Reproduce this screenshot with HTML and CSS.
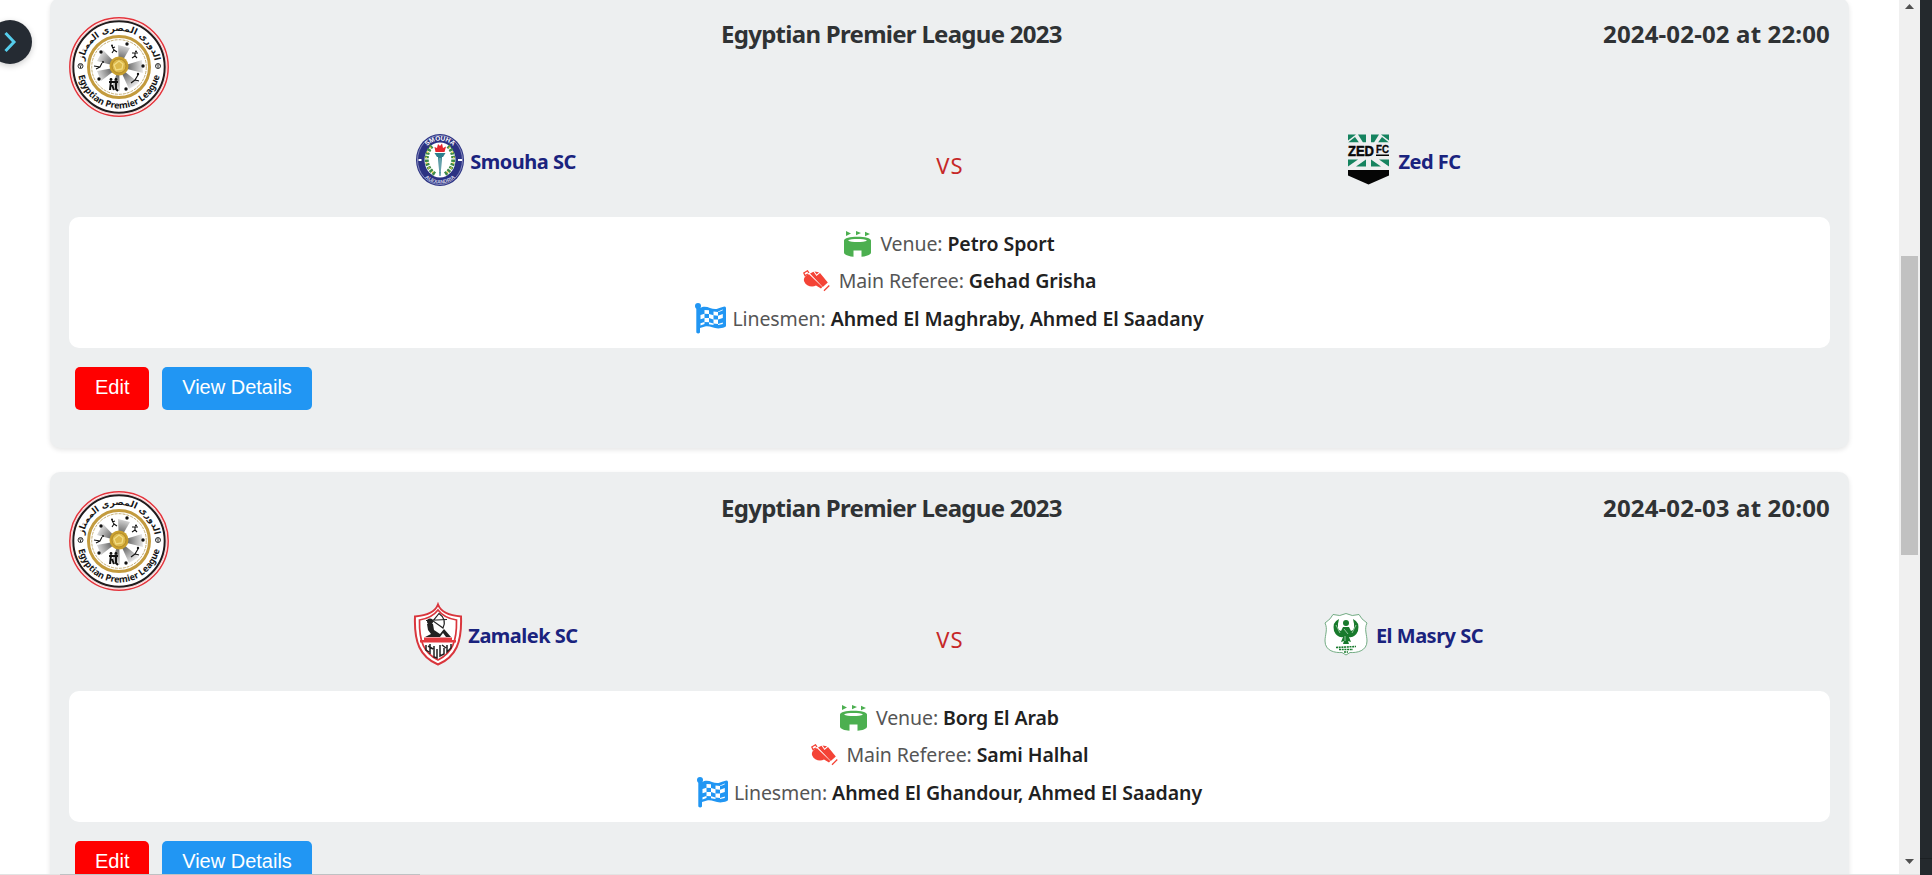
FILE: index.html
```
<!DOCTYPE html>
<html lang="en">
<head>
<meta charset="utf-8">
<title>Matches</title>
<link rel="stylesheet" href="styles.css">
</head>
<body>
<svg class="defs" width="0" height="0">
  <defs>
    <radialGradient id="ray" gradientUnits="userSpaceOnUse" cx="50" cy="50" r="26">
      <stop offset="0.3" stop-color="#666"/><stop offset="1" stop-color="#f4f4f4"/>
    </radialGradient>
    <path id="arcTop" d="M14 50A36 36 0 0 1 86 50"/>
    <path id="arcBottom" d="M8.500 50A41.500 41.500 0 0 0 91.500 50"/>
    <path id="smTop" d="M6.500 26A18.500 19.500 0 0 1 43.500 26"/>
    <path id="smBottom" d="M2.500 26A22.500 23.500 0 0 0 47.500 26"/>
    <symbol id="league" viewBox="0 0 100 100">
      <circle cx="50" cy="50" r="49.200" fill="#fff" stroke="#e4343c" stroke-width="1.500"/>
      <circle cx="50" cy="50" r="47.600" fill="#fff" stroke="#f4a5a8" stroke-width=".6"/>
      <circle cx="50" cy="50" r="45.700" fill="#fff" stroke="#211c1d" stroke-width="2"/>
      <circle cx="50" cy="50" r="30.500" fill="#fff" stroke="#c39b3e" stroke-width="3"/>
      <circle cx="50" cy="50" r="27.300" fill="none" stroke="#b59a55" stroke-width=".8" stroke-dasharray="3 1"/>
      <g fill="url(#ray)">
        <path d="M50 50L49 28L61 31Z"/>
        <path d="M50 50L73 43L74 56Z"/>
        <path d="M50 50L70 66L60 72Z"/>
        <path d="M50 50L51 74L42 73Z"/>
        <path d="M50 50L32 64L28 54Z"/>
        <path d="M50 50L28 44L34 33Z"/>
      </g>
      <circle cx="50" cy="49" r="9.500" fill="#c9a02f"/>
      <circle cx="50" cy="49" r="7" fill="#ddb94b" stroke="#a98122" stroke-width=".8"/>
      <path d="M50 44L54 47L53 52L47 53L45 48Z" fill="none" stroke="#f2dc83" stroke-width="1.300"/>
      <g fill="#111">
        <circle cx="58" cy="27" r="1.700"/><circle cx="32" cy="35" r="1.700"/><circle cx="74" cy="49" r="1.700"/>
        <circle cx="30" cy="62" r="1.700"/><circle cx="57" cy="72" r="1.700"/>
        <circle cx="43" cy="28.500" r="1"/><circle cx="67" cy="34.500" r="1"/><circle cx="69" cy="57" r="1.200"/><circle cx="34" cy="45" r="1"/><circle cx="42" cy="62.500" r="1.400"/><circle cx="47" cy="62.500" r="1.400"/>
      </g>
      <g fill="none" stroke="#111" stroke-width="1.100">
        <path d="M43 29L45 33L48 35M45 33L43 36M46 30L43 31"/>
        <path d="M63 36L69 36M66 36L66 39L68 41M66 39L63 41"/>
        <path d="M33 46L31 50L25 49M31 50L27 52"/>
        <path d="M69 58L66 63L70 64M66 63L62 66"/>
        <path stroke-width="2" d="M42 64L41 73M47 64L47 72L49 74M40 65L49 65M43 68L45 73"/>
      </g>
      <g fill="none" stroke="#333" stroke-width="1">
        <circle cx="11.500" cy="49" r="2.500"/><circle cx="89" cy="49" r="2.500"/>
        <path d="M10 48H13M11.500 49V51M87.500 48H90.500M89 49V51"/>
      </g>
      <text class="crest-arabic"><textPath href="#arcTop" startOffset="50%" text-anchor="middle">الدورى المصرى الممتاز</textPath></text>
      <text class="crest-latin"><textPath href="#arcBottom" startOffset="50%" text-anchor="middle">Egyptian Premier League</textPath></text>
    </symbol>
    <symbol id="stadium" viewBox="0 0 27 26">
      <path d="M2 0L7 2.500L2 5ZM12 0L17 2L12 4.200ZM21 .8L26 3L21 5.300Z"/>
      <path fill-rule="evenodd" d="M0 9.500C0 7 6 5.700 13.500 5.700S27 7 27 9.500V21.500C27 24 22 25.400 17.500 25.700V19.500H9.500V25.700C5 25.400 0 24 0 21.500ZM4 9.400C7 11.400 20 11.400 23 9.400C20 7.500 7 7.500 4 9.400Z"/>
    </symbol>
    <symbol id="whistle" viewBox="0 0 27 22">
      <path d="M6 4.200L19.300 17L18 18.500L13 15.500C9 18 3 16 1.200 11.500C.2 8.500 2 5.500 6 4.200Z"/>
      <path d="M7 3.500L10.500 1.800L13.500 6L17 3L24.800 12.600L19.800 17Z"/>
      <path d="M11.500 1.500L16 2.300L13.700 4.600Z"/>
      <path fill="none" stroke="#f44336" stroke-width="1.300" d="M5 4L2 5.500L.8 3L4.500 .8L6 3M21 20.800L26.300 15.500"/>
    </symbol>
    <symbol id="flag" viewBox="0 0 31 31">
      <circle cx="3" cy="3" r="3"/><path d="M1.300 3H5V29.500Q3.200 31.500 1.300 29.500Z"/>
      <path d="M5 5C12 1 17 8 23 5.500C26 4.300 28 4 30 3.500Q31 4 31 5V22.500Q31 23.500 30 24C20 28 16 22 10 23.500L5 25Z"/>
      <path fill="#fff" d="M9.500 7L14 7.200V11L9.500 10.700ZM18.500 8.500L23 9V12.700L18.500 12.200ZM5.500 12L9.500 10.700V15L5.500 16.200ZM14 11L18.500 12.200V16.500L14 15ZM23 12.700L27.800 11V15L23 16.500ZM9.500 15L14 15V19.200L9.500 19ZM18.500 16.500L23 16.500V21L18.500 20.500ZM27.800 7.300L25 8.500L23 9V8.500L27.800 6.500ZM5.500 20.300L9.500 19V21L5.500 22.500ZM14 19.200L18.500 20.500V22L14 21.300ZM23 21L27.800 19.500V21L23 22Z"/>
    </symbol>
  </defs>
</svg>

<main class="page">
  <section class="content">
    <article class="card">
      <header class="card-head">
        <svg class="league"><use href="#league"/></svg>
        <h2 class="title">Egyptian Premier League 2023</h2>
        <time class="date">2024-02-02 at 22:00</time>
      </header>
      <div class="teams">
        <div class="team">
          <svg class="badge" viewBox="0 0 50 64">
            <g transform="translate(0 6)">
              <ellipse cx="25" cy="26" rx="24" ry="26" fill="#2b3283"/>
              <ellipse cx="25" cy="26" rx="22.500" ry="24.500" fill="none" stroke="#aeb2d6" stroke-width=".7"/>
              <ellipse cx="25" cy="26" rx="15.500" ry="17.500" fill="#fff"/>
              <path fill="none" stroke="#3e8a48" stroke-width="4" stroke-dasharray="2.500 1.200" d="M17 12C10 19 9 33 20 40M33 12C40 19 41 33 30 40"/>
              <path fill="none" stroke="#e8c84a" stroke-width="1.500" stroke-dasharray="1.500 4" d="M16 13C9 20 9 33 20 40M34 13C41 20 41 33 30 40"/>
              <path fill="#e5262d" d="M20.500 18L19.500 13L22 14L23 10L25 12L27 9.500L28 14L31 12.500L29.500 18Z"/>
              <path fill="#2d7f8c" d="M19.500 19H30.500L28 23H27L25.500 42H24.500L23 23H22Z"/>
              <path stroke="#9fc4cb" d="M25 24V38"/>
              <path stroke="#fff" stroke-width="2" d="M3.500 26H6.500M43 26H47"/>
              <text class="smouha-top"><textPath href="#smTop" startOffset="50%" text-anchor="middle">SMOUHA</textPath></text>
              <text class="smouha-bottom"><textPath href="#smBottom" startOffset="50%" text-anchor="middle">ALEXANDRIA</textPath></text>
            </g>
          </svg>
          <span class="team-name">Smouha SC</span>
        </div>
        <span class="versus">VS</span>
        <div class="team">
          <svg class="badge" viewBox="0 0 50 64">
            <g transform="translate(5 6.500)">
              <path fill="#15835f" d="M0 0H8L0 6ZM10 0H18V8H15ZM23 0H31L26 8H23ZM33 0H41V6ZM0 8L7 2.500L11 8ZM41 8L34 2.500L30 8Z"/>
              <path fill="#15835f" d="M0 25H10L0 32ZM8 32L18 25V32ZM23 25L33 32H23ZM31 25H41V32Z"/>
              <rect y="8" width="41" height="16" fill="#edeff0"/>
              <text class="zed-word" x="0" y="21.500" textLength="26" lengthAdjust="spacingAndGlyphs">ZED</text>
              <text class="zed-fc" x="28" y="18" textLength="13" lengthAdjust="spacingAndGlyphs">FC</text>
              <path fill="#050505" d="M28 20H41V21.500H28ZM0 35.500H41V41L20.500 50L0 41Z"/>
            </g>
          </svg>
          <span class="team-name">Zed FC</span>
        </div>
      </div>
      <div class="details">
        <p class="row"><svg class="icon stadium"><use href="#stadium"/></svg><span class="label">Venue: <b>Petro Sport</b></span></p>
        <p class="row"><svg class="icon whistle"><use href="#whistle"/></svg><span class="label">Main Referee: <b>Gehad Grisha</b></span></p>
        <p class="row lines"><svg class="icon flag"><use href="#flag"/></svg><span class="label">Linesmen: <b>Ahmed El Maghraby, Ahmed El Saadany</b></span></p>
      </div>
      <div class="actions"><button class="btn edit">Edit</button><button class="btn view">View Details</button></div>
    </article>

    <article class="card">
      <header class="card-head">
        <svg class="league"><use href="#league"/></svg>
        <h2 class="title">Egyptian Premier League 2023</h2>
        <time class="date">2024-02-03 at 20:00</time>
      </header>
      <div class="teams">
        <div class="team">
          <svg class="badge" viewBox="0 0 50 64">
            <path fill="#fff" stroke="#d9363d" stroke-width="2" d="M25 2.500Q29 13 48 14.500C49 40 43 55 25 62.500C7 55 1 40 2 14.500Q21 13 25 2.500Z"/>
            <path fill="#fff" stroke="#d9363d" stroke-width="1.700" d="M25 8Q31 16 43.500 18C44 40 39 51 25 58C11 51 6 40 6.500 18Q19 16 25 8Z"/>
            <path fill="#e33b40" d="M11 35.500H39V38H43V40.500H7V38H11Z"/>
            <circle cx="17" cy="19.500" r="3" fill="#222"/>
            <path fill="#222" d="M14 22L20 22L21 28L27 32L31 27L38 35H33L30 31L27 35H12L18 32L15 28Z"/>
            <path fill="none" stroke="#222" stroke-width="1.200" d="M13 18.500L34 17.500M26 11.500Q34 17 30 26L20 19Z"/>
            <path fill="none" stroke="#222" stroke-width="1.500" d="M13 43V48L16 50M17 42V52M21 44V55L24 56V47M27 43V54L31 52V46M34 43V50L38 46V42M29 43L33 46M15 44L20 47"/>
          </svg>
          <span class="team-name">Zamalek SC</span>
        </div>
        <span class="versus">VS</span>
        <div class="team">
          <svg class="badge" viewBox="0 0 50 64">
            <path fill="#fff" stroke="#65a477" stroke-width=".9" d="M12 12.500Q19 15 25 11.500Q31 15 38 12.500Q40 17 46 21C43 27 46 33 46 39C46 49 36 51 29 50.500L25 53L21 50.500C14 51 4 49 4 39C4 33 7 27 4 21Q10 17 12 12.500Z"/>
            <g fill="#187a2c">
              <circle cx="25" cy="21" r="3"/>
              <path d="M22 25H28L30 29Q35 28 32 17Q39 20 37 29Q34 36 28 35L30 40L27 39L28 42H22L23 39L20 40L22 35Q16 36 13 29Q11 20 18 17Q15 28 20 29Z"/>
              <path fill="none" stroke="#187a2c" stroke-width="1.600" stroke-dasharray="2 .7" d="M15 45.500L35 44.500M18 47.500H32M23 50H27"/>
            </g>
            <path fill="none" stroke="#c8e3cd" stroke-width=".7" d="M15 23L19 31M35 23L31 31M23 27L27 32M24 34V39"/>
          </svg>
          <span class="team-name">El Masry SC</span>
        </div>
      </div>
      <div class="details">
        <p class="row"><svg class="icon stadium"><use href="#stadium"/></svg><span class="label">Venue: <b>Borg El Arab</b></span></p>
        <p class="row"><svg class="icon whistle"><use href="#whistle"/></svg><span class="label">Main Referee: <b>Sami Halhal</b></span></p>
        <p class="row lines"><svg class="icon flag"><use href="#flag"/></svg><span class="label">Linesmen: <b>Ahmed El Ghandour, Ahmed El Saadany</b></span></p>
      </div>
      <div class="actions"><button class="btn edit">Edit</button><button class="btn view">View Details</button></div>
    </article>
  </section>
  <aside class="scrollbar">
    <svg width="21" height="16"><path fill="#505050" d="M6 9L10.500 4L15 9Z"/></svg>
    <div class="thumb"></div>
    <svg class="down" width="21" height="16"><path fill="#505050" d="M6 4H15L10.500 9Z"/></svg>
  </aside>
  <aside class="edge"></aside>
</main>
<button class="toggle" aria-label="Open menu"><svg width="64" height="64" viewBox="0 0 64 64"><path fill="none" stroke="#55cdec" stroke-width="3" d="M37.500 23L46 32L37.500 41"/></svg></button>
<div class="bottom-line"><span></span></div>
</body>
</html>
```
FILE: styles.css
```
* { box-sizing: border-box; }
body { margin: 0; height: 875px; overflow: hidden; background: #fff; font-family: "Noto Sans", "Open Sans", sans-serif; }
.defs { position: absolute; }
.page { display: flex; height: 875px; overflow: hidden; }
.content { flex: 1; height: 875px; overflow: hidden; padding: 0 50px; }
.card { height: 450px; margin-bottom: 24px; padding: 19px 19px 0; border-radius: 10px; background: #edeff0; box-shadow: 0 2px 5px rgba(0, 0, 0, .1); }
.card:first-child { margin-top: -2px; }
.card-head { display: grid; grid-template-columns: 652px 1fr auto; height: 100px; }
.league { width: 100px; height: 100px; }
.title, .date { margin: 0; height: 34px; font-size: 24px; line-height: 34px; font-weight: 700; color: #2f3234; white-space: nowrap; }
.title { letter-spacing: -.72px; }
.date { letter-spacing: .15px; }
.crest-arabic { font: bold 8.800px "DejaVu Sans", sans-serif; fill: #151515; }
.crest-latin { font: bold 9px "Noto Sans", sans-serif; fill: #151515; }
.smouha-top { font: bold 6.500px "Liberation Sans", sans-serif; fill: #fff; }
.smouha-bottom { font: bold 5px "Liberation Sans", sans-serif; fill: #d5d7ea; }
.zed-word { font: bold 14px "Liberation Sans", sans-serif; fill: #080808; stroke: #080808; stroke-width: .5px; }
.zed-fc { font: bold 10px "Liberation Sans", sans-serif; fill: #080808; stroke: #080808; stroke-width: .3px; }
.teams { display: grid; grid-template-columns: 853px 55px 853px; align-items: center; height: 64px; margin-top: 11px; }
.team { display: flex; align-items: center; justify-content: center; gap: 5px; }
.team:last-child { padding-right: 3px; }
.badge { width: 50px; height: 64px; }
.team-name { padding-top: 3px; font-size: 20px; line-height: 28px; font-weight: 700; letter-spacing: -.5px; color: #1a237e; white-space: nowrap; }
.versus { padding-top: 10px; padding-left: 1px; text-align: center; font-size: 22px; line-height: 28px; letter-spacing: 1px; color: #c62828; }
.details { height: 131px; margin-top: 25px; padding-top: 8px; border-radius: 10px; background: #fff; }
.row { display: flex; align-items: center; justify-content: center; height: 37.600px; margin: 0; gap: 9px; }
.lines { gap: 6px; }
.label { font-size: 19.500px; line-height: 28px; letter-spacing: -.1px; color: #555; white-space: nowrap; }
.label b { font-weight: 600; letter-spacing: -.06px; color: #212121; }
.stadium { width: 27px; height: 26px; fill: #4caf50; }
.whistle { width: 27px; height: 22px; fill: #f44336; }
.flag { width: 31px; height: 31px; fill: #2196f3; }
.actions { display: flex; gap: 13px; padding: 19px 6px 0; }
.btn { height: 43px; border: 0; border-radius: 5px; padding: 0 20px 2px; color: #fff; font: 20px/41px "Liberation Sans", sans-serif; white-space: nowrap; }
.edit { width: 74px; background: #f00; }
.view { width: 150px; background: #2196f3; }
.scrollbar { display: flex; flex-direction: column; width: 21px; background: #f0f0f0; }
.thumb { width: 17px; height: 299px; margin: 240px 0 0 2px; background: #c1c1c1; }
.down { margin-top: auto; margin-bottom: 4px; }
.edge { width: 12px; background: linear-gradient(#24292d 858px, #1c2023 858px, #1c2023 859px, #24292d 859px); }
.toggle { position: absolute; left: -12px; top: 20px; width: 44px; height: 44px; padding: 0; border: 0; border-radius: 22px; background: #252b33; box-shadow: 0 2px 6px rgba(0, 0, 0, .2); }
.toggle svg { display: block; margin: -10px 0 0 -20px; }
.bottom-line { position: absolute; left: 0; bottom: 0; width: 1920px; height: 1px; background: #e3e3e3; }
.bottom-line span { display: block; width: 360px; height: 1px; margin-left: 60px; background: #bfc1c3; }
```
